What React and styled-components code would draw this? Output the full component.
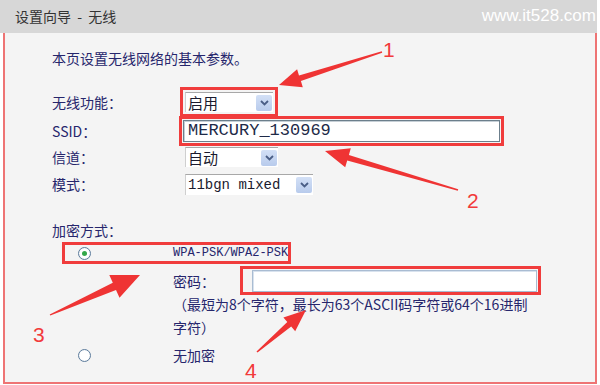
import React from 'react';
import styled, { createGlobalStyle } from 'styled-components';

const GlobalStyle = createGlobalStyle`
    body {
        margin: 0;
        background: #ffffff;
        font-family: "Noto Sans CJK SC", "Liberation Sans", sans-serif;
    }
`;

const CJK = '"Noto Sans CJK SC", "Liberation Sans", sans-serif';
const MONO = '"Liberation Mono", "Noto Sans CJK SC", monospace';
const NAVY = '#26266c';
const MARK = '#f03c3c';

// tapered annotation arrow: thin tail, wide head
const arrowPoints = (tail, tip, headLen, headWidth, neck) => {
    const dx = tip[0] - tail[0];
    const dy = tip[1] - tail[1];
    const len = Math.hypot(dx, dy);
    const ux = dx / len;
    const uy = dy / len;
    const nx = -uy;
    const ny = ux;
    const bx = tip[0] - ux * headLen;
    const by = tip[1] - uy * headLen;
    const p = (x, y) => `${x.toFixed(1)},${y.toFixed(1)}`;
    return [
        p(tail[0] + nx * 0.7, tail[1] + ny * 0.7),
        p(bx + nx * neck / 2, by + ny * neck / 2),
        p(bx + nx * headWidth / 2, by + ny * headWidth / 2),
        p(tip[0], tip[1]),
        p(bx - nx * headWidth / 2, by - ny * headWidth / 2),
        p(bx - nx * neck / 2, by - ny * neck / 2),
        p(tail[0] - nx * 0.7, tail[1] - ny * 0.7),
    ].join(' ');
};

const arrows = [
    { tail: [382, 52], tip: [279, 85], head: 22, width: 19, neck: 6 },
    { tail: [458, 190], tip: [325, 151], head: 24, width: 20, neck: 6 },
    { tail: [50, 315], tip: [140, 275], head: 28, width: 25, neck: 8 },
    { tail: [257, 352], tip: [306, 310], head: 22, width: 18, neck: 6 },
];

const labels = [
    { n: '1', x: 383, y: 57 },
    { n: '2', x: 467, y: 208 },
    { n: '3', x: 33, y: 342 },
    { n: '4', x: 245, y: 378 },
];

const Chevron = () => (
    <svg width="9" height="6" viewBox="0 0 9 6">
        <path d="M1 1 L4.5 4.5 L8 1" fill="none" stroke="#4a5e86" strokeWidth="1.8" />
    </svg>
);

const Select = ({ value, width, height, mono }) => (
    <SelectBox $width={width} $height={height}>
        <SelectValue $mono={mono}>{value}</SelectValue>
        <DropButton><Chevron /></DropButton>
    </SelectBox>
);

const App = () => {
    return (
        <Page>
            <GlobalStyle />
            <Header>
                <Title>设置向导 - 无线</Title>
                <Watermark>www.it528.com</Watermark>
            </Header>
            <Panel>
                <Intro>本页设置无线网络的基本参数。</Intro>
                <FieldRow $top={21}>
                    <Label>无线功能：</Label>
                    <Marked $offset={2}>
                        <Select value="启用" width={88} height={20} />
                    </Marked>
                </FieldRow>
                <FieldRow $top={3}>
                    <Label>SSID：</Label>
                    <Marked $offset={1} $shift={-2}>
                        <TextInput>MERCURY_130969</TextInput>
                    </Marked>
                </FieldRow>
                <FieldRow $top={0}>
                    <Label>信道：</Label>
                    <Select value="自动" width={93} height={20} />
                </FieldRow>
                <FieldRow $top={1}>
                    <Label>模式：</Label>
                    <Select value="11bgn mixed" width={128} height={21} mono />
                </FieldRow>
                <SectionLabel>加密方式：</SectionLabel>
                <OptionRow $marked $top={5}>
                    <Radio $checked />
                    <OptionText $mono>WPA-PSK/WPA2-PSK</OptionText>
                </OptionRow>
                <PasswordRow>
                    <Label>密码：</Label>
                    <PasswordMark>
                        <PasswordInput />
                    </PasswordMark>
                </PasswordRow>
                <Note>
                    （最短为8个字符，最长为63个ASCII码字符或64个16进制<br />字符）
                </Note>
                <OptionRow $top={8}>
                    <Radio />
                    <OptionText>无加密</OptionText>
                </OptionRow>
            </Panel>
            <Annotations width="600" height="385" viewBox="0 0 600 385">
                {arrows.map((a, i) => (
                    <polygon key={i} points={arrowPoints(a.tail, a.tip, a.head, a.width, a.neck)} fill="#ef3434" />
                ))}
                {labels.map((l) => (
                    <text key={l.n} x={l.x} y={l.y} fill="#f23a3a" fontSize="21" fontFamily="'Liberation Sans', sans-serif">
                        {l.n}
                    </text>
                ))}
            </Annotations>
        </Page>
    );
};

export default App;

const Page = styled.div`
    position: relative;
    width: 597px;
    height: 385px;
`;

const Header = styled.div`
    height: 33px;
    background: #d7d7d7;
    display: flex;
    align-items: center;
    justify-content: space-between;
    padding: 0 1px 2px 15px;
    box-sizing: border-box;
`;

const Title = styled.div`
    font-family: ${CJK};
    font-size: 14px;
    color: #333333;
    word-spacing: 3px;
`;

const Watermark = styled.div`
    font-family: "Liberation Sans", sans-serif;
    font-size: 17px;
    color: #ffffff;
`;

const Panel = styled.div`
    margin-left: 3px;
    height: 351px;
    box-sizing: border-box;
    background: #f4f4f4;
    border: 2px solid #ee7474;
    border-top: none;
    padding: 15px 0 0 47px;
    display: flex;
    flex-direction: column;
    align-items: flex-start;
    font-family: ${CJK};
    font-size: 14px;
    color: ${NAVY};
`;

const Intro = styled.div`
    line-height: 20px;
`;

const FieldRow = styled.div`
    display: grid;
    grid-template-columns: 133px auto;
    align-items: center;
    height: 26px;
    margin-top: ${(p) => p.$top}px;
`;

const Label = styled.span`
    line-height: 20px;
`;

const Marked = styled.div`
    display: flex;
    margin-left: ${(p) => p.$shift || 0}px;
    outline: 3px solid ${MARK};
    outline-offset: ${(p) => p.$offset}px;
`;

const SelectBox = styled.div`
    width: ${(p) => p.$width}px;
    height: ${(p) => p.$height}px;
    box-sizing: border-box;
    background: #ffffff;
    border-top: 1px solid #a8a8a8;
    border-left: 1px solid #cfcfcf;
    display: flex;
    align-items: center;
    justify-content: space-between;
    padding: 0 1px 0 2px;
`;

const SelectValue = styled.span`
    font-family: ${(p) => (p.$mono ? MONO : CJK)};
    font-size: ${(p) => (p.$mono ? 14 : 15)}px;
    line-height: 18px;
    color: #1a1a2e;
`;

const DropButton = styled.span`
    width: 16px;
    height: 16px;
    border-radius: 2px;
    background: linear-gradient(#d3e0f6, #b8cbec);
    display: flex;
    align-items: center;
    justify-content: center;
`;

const TextInput = styled.div`
    width: 317px;
    height: 22px;
    box-sizing: border-box;
    background: #ffffff;
    border: 1px solid #6c7f8c;
    box-shadow: inset 1px 1px 0 #c6cfd6;
    padding-left: 4px;
    font-family: ${MONO};
    font-size: 17px;
    line-height: 20px;
    color: #1e2a48;
`;

const SectionLabel = styled.div`
    line-height: 20px;
    margin-top: 23px;
`;

const OptionRow = styled.div`
    display: grid;
    grid-template-columns: 95px auto;
    align-items: center;
    height: 16px;
    margin: ${(p) => p.$top}px 0 0 13px;
    padding-left: 13px;
    outline: ${(p) => (p.$marked ? `3px solid ${MARK}` : 'none')};
`;

const Radio = styled.span`
    width: 13px;
    height: 13px;
    box-sizing: border-box;
    border-radius: 50%;
    border: 1px solid #5d7c9c;
    background: radial-gradient(circle, #ffffff 55%, #dbe4ee 100%);
    display: flex;
    align-items: center;
    justify-content: center;

    &::after {
        content: '';
        width: 5px;
        height: 5px;
        border-radius: 50%;
        background: ${(p) => (p.$checked ? '#33a84a' : 'transparent')};
    }
`;

const OptionText = styled.span`
    font-family: ${(p) => (p.$mono ? MONO : CJK)};
    font-size: ${(p) => (p.$mono ? 12 : 14)}px;
    line-height: 16px;
    white-space: nowrap;
`;

const PasswordRow = styled.div`
    display: grid;
    grid-template-columns: 67px auto;
    align-items: center;
    margin: 5px 0 0 121px;
`;

const PasswordMark = styled.div`
    display: flex;
    border: 3px solid ${MARK};
    padding: 1px 1px 0 9px;
`;

const PasswordInput = styled.div`
    width: 285px;
    height: 22px;
    box-sizing: border-box;
    background: #ffffff;
    border: 1px solid #a9bcd2;
    box-shadow: inset 1px 1px 0 #d8e2ee;
`;

const Note = styled.div`
    margin: -2px 0 0 121px;
    line-height: 23px;
    font-size: 14px;
    white-space: nowrap;
`;

const Annotations = styled.svg`
    position: absolute;
    left: 0;
    top: 0;
    pointer-events: none;
`;
